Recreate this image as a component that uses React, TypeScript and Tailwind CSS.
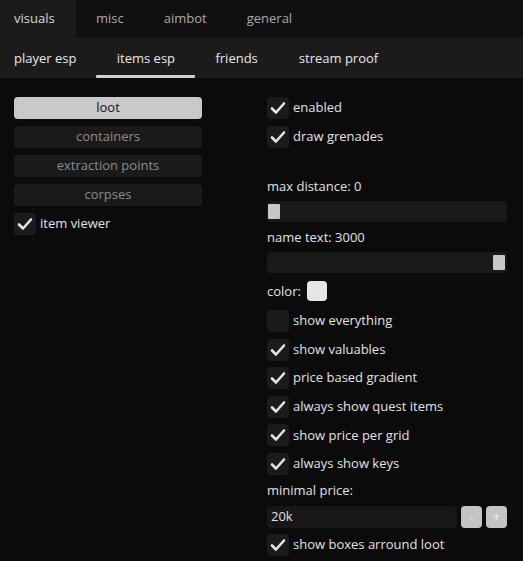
import { ReactNode } from 'react';

const TOP_TABS = ['visuals', 'misc', 'aimbot', 'general'];
const SUB_TABS = ['player esp', 'items esp', 'friends', 'stream proof'];
const CATEGORIES = ['loot', 'containers', 'extraction points', 'corpses'];

function CheckIcon() {
  return (
    <svg viewBox="0 0 22 22" className="h-[22px] w-[22px]" aria-hidden>
      <path
        d="M5 11.5 9 15.5 17 6.5"
        fill="none"
        stroke="#e4e4e4"
        strokeWidth="2.6"
        strokeLinecap="round"
        strokeLinejoin="round"
      />
    </svg>
  );
}

function Checkbox({ label, checked }: { label: string; checked: boolean }) {
  return (
    <div className="flex h-[22px] items-center gap-[4px]">
      <div className="flex h-[22px] w-[22px] items-center justify-center rounded-[4px] bg-[#1b1b1b]">
        {checked && <CheckIcon />}
      </div>
      <span className="text-[13px] text-[#e2e2e2]">{label}</span>
    </div>
  );
}

function Slider({ thumbRight }: { thumbRight?: boolean }) {
  return (
    <div
      className={`flex h-[21px] w-[240px] items-center rounded-[3px] bg-[#191919] px-[1px] ${
        thumbRight ? 'justify-end pr-[2px]' : ''
      }`}
    >
      <div className="h-[15px] w-[12px] rounded-[1px] bg-[#c8c8c8]" />
    </div>
  );
}

function Label({ children }: { children: ReactNode }) {
  return <div className="text-[13px] leading-[18px] text-[#e2e2e2]">{children}</div>;
}

export default function App() {
  return (
    <div
      className="h-[561px] w-[523px] overflow-hidden bg-[#0b0b0b]"
      style={{ fontFamily: '"Open Sans", "Noto Sans", sans-serif' }}
    >
      <div className="flex h-[38px] bg-[#101010]">
        {TOP_TABS.map((tab, i) => (
          <div
            key={tab}
            className={`flex items-center px-[14px] text-[13px] ${
              i === 0 ? 'w-[76px] bg-[#1b1b1b] text-[#d8d8d8]' : 'text-[#a8a8a8]'
            } ${i === 1 ? 'ml-[6px] mr-[12px]' : ''} ${i === 2 ? 'mr-[12px]' : ''}`}
          >
            {tab}
          </div>
        ))}
      </div>

      <div className="flex h-[40px] bg-[#1b1b1b] pl-[14px]">
        {SUB_TABS.map((tab, i) => (
          <div
            key={tab}
            className={`relative flex items-center pt-[1px] text-[13px] text-[#e8e8e8] ${
              i === 0 ? 'mr-[20px]' : ''
            } ${i === 1 ? 'w-[99px] justify-center mr-[20px]' : ''} ${i === 2 ? 'mr-[41px]' : ''}`}
          >
            {tab}
            {i === 1 && (
              <div className="absolute bottom-[0px] left-0 h-[3px] w-[99px] rounded-[1px] bg-[#cfcfcf]" />
            )}
          </div>
        ))}
      </div>

      <div className="flex pl-[14px] pt-[19px]">
        <div className="flex w-[188px] flex-col gap-[7px]">
          {CATEGORIES.map((cat, i) => (
            <div
              key={cat}
              className={`flex h-[22px] items-center justify-center rounded-[4px] text-[13px] ${
                i === 0 ? 'bg-[#c9c9c9] text-[#161616]' : 'bg-[#1a1a1a] text-[#8c8c8c]'
              }`}
            >
              {cat}
            </div>
          ))}
          <Checkbox label="item viewer" checked />
        </div>

        <div className="ml-[65px] flex w-[240px] flex-col">
          <div className="flex flex-col gap-[7px]">
            <Checkbox label="enabled" checked />
            <Checkbox label="draw grenades" checked />
          </div>

          <div className="mt-[29px]">
            <Label>max distance: 0</Label>
          </div>
          <div className="mt-[6px]">
            <Slider />
          </div>
          <div className="mt-[6px]">
            <Label>name text: 3000</Label>
          </div>
          <div className="mt-[6px]">
            <Slider thumbRight />
          </div>

          <div className="mt-[8px] flex h-[20px] items-center gap-[6px]">
            <Label>color:</Label>
            <div className="h-[20px] w-[20px] rounded-[4px] bg-[#e6e6e6]" />
          </div>

          <div className="mt-[9px] flex flex-col gap-[6.6px]">
            <Checkbox label="show everything" checked={false} />
            <Checkbox label="show valuables" checked />
            <Checkbox label="price based gradient" checked />
            <Checkbox label="always show quest items" checked />
            <Checkbox label="show price per grid" checked />
            <Checkbox label="always show keys" checked />
          </div>

          <div className="mt-[6px]">
            <Label>minimal price:</Label>
          </div>
          <div className="mt-[7px] flex h-[22px] gap-[4px]">
            <div className="flex flex-1 items-center rounded-[4px] bg-[#171717] pl-[4px] text-[13px] text-[#e2e2e2]">
              20k
            </div>
            <div className="flex w-[21px] items-center justify-center rounded-[4px] bg-[#c4c4c4] text-[11px] text-[#eeeeee]">
              -
            </div>
            <div className="flex w-[21px] items-center justify-center rounded-[4px] bg-[#c4c4c4] text-[12px] text-[#eeeeee]">
              +
            </div>
          </div>
          <div className="mt-[6px]">
            <Checkbox label="show boxes arround loot" checked />
          </div>
        </div>
      </div>
    </div>
  );
}
